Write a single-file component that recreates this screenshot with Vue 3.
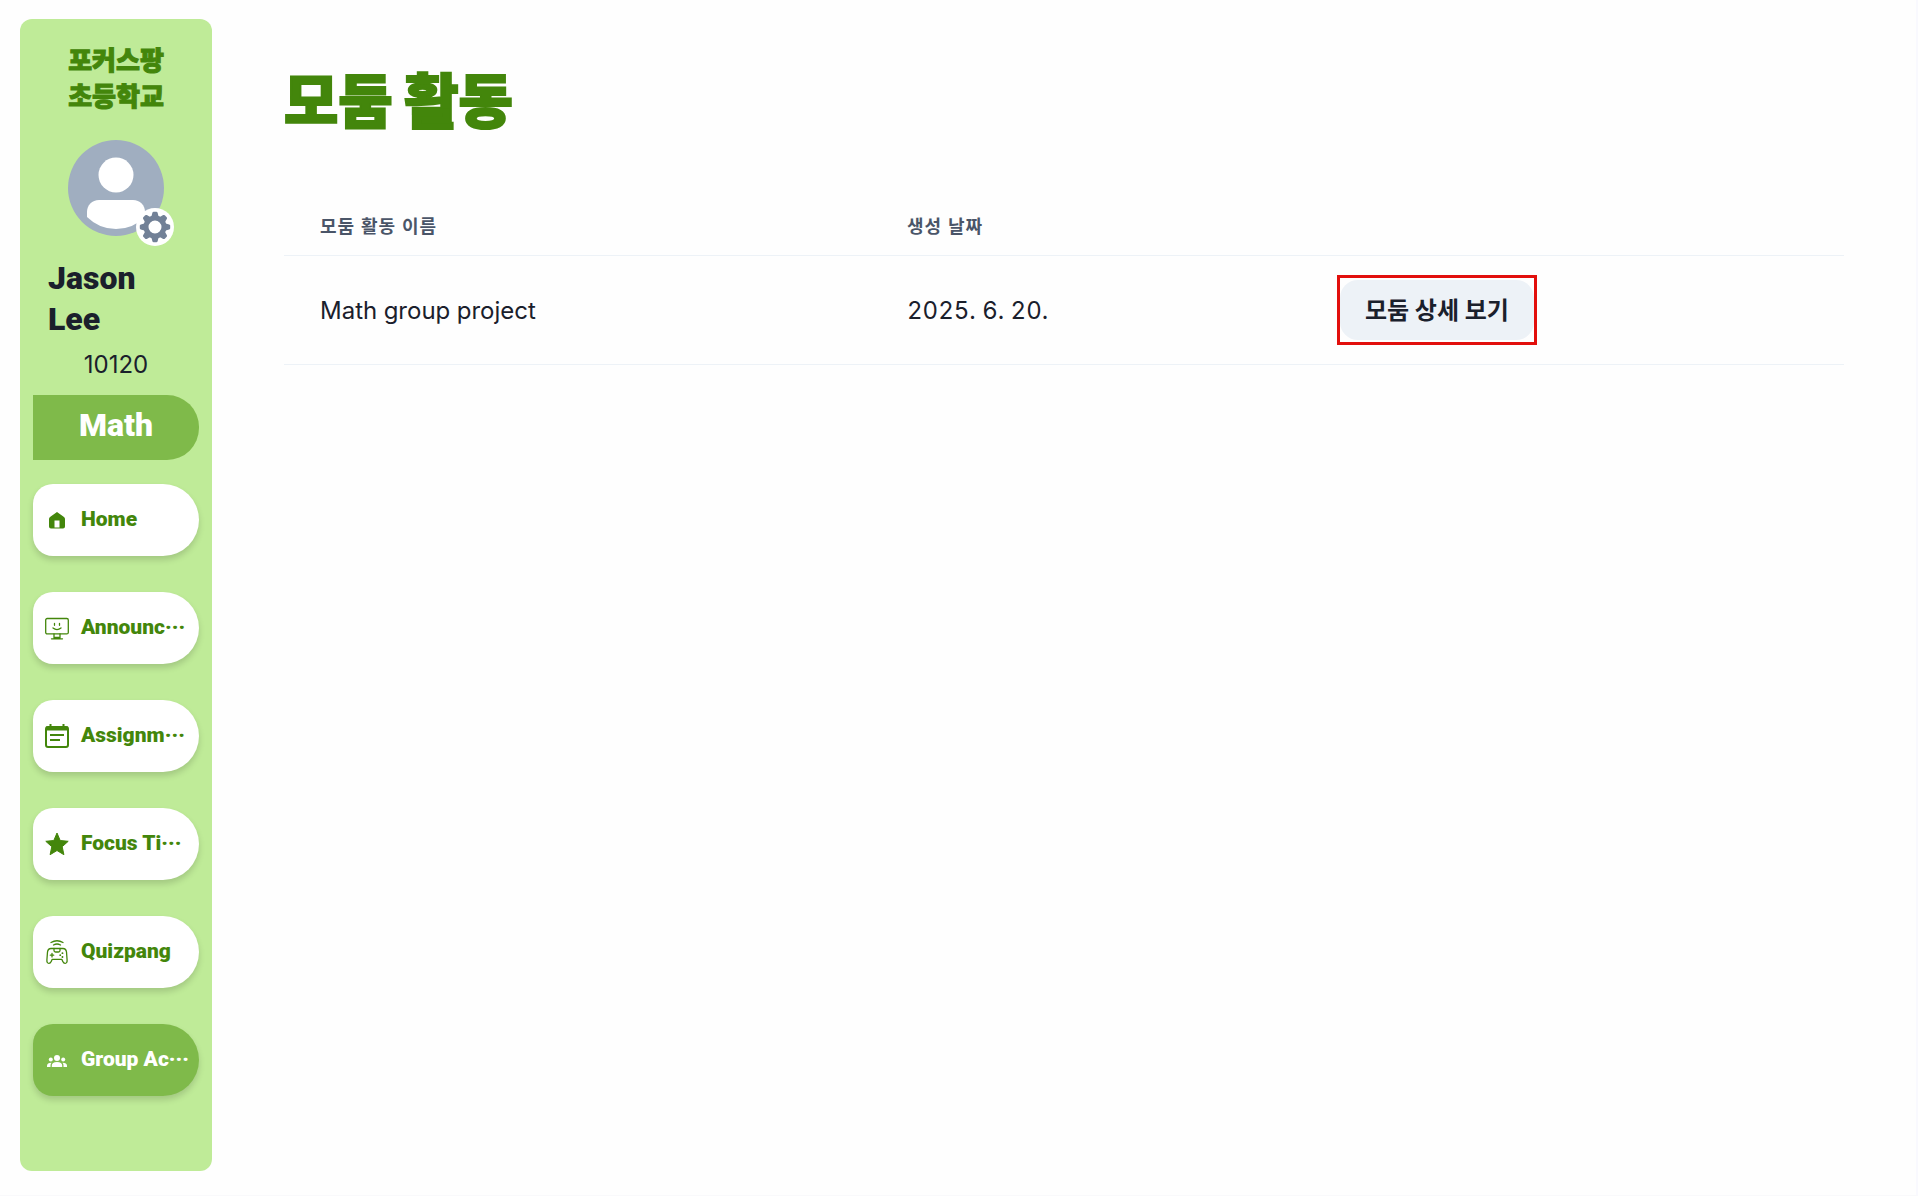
<template>
  <div class="layout">
    <!-- 사이드바 -->
    <aside class="sidebar">
      <h2 class="school">포커스팡<br />초등학교</h2>

      <div class="avatar">
        <svg class="avatar-img" viewBox="0 0 96 96">
          <defs>
            <clipPath id="face"><circle cx="48" cy="48" r="41" /></clipPath>
          </defs>
          <circle cx="48" cy="48" r="48" fill="#a0aec0" />
          <circle cx="48" cy="35" r="17.5" fill="#fff" />
          <path
            clip-path="url(#face)"
            fill="#fff"
            d="M31 60h34c7 0 12 5 12 12v24H19V72c0-7 5-12 12-12z"
          />
        </svg>
        <button class="setting" aria-label="설정">
          <svg viewBox="-16 -16 32 32" width="32" height="32">
            <g fill="#718096">
              <path
                v-for="n in 8"
                :key="n"
                :transform="`rotate(${n * 45})`"
                d="M-4 -9L-2.6 -14.2Q-2.3 -15.2 -1.3 -15.2H1.3Q2.3 -15.2 2.6 -14.2L4 -9z"
              />
            </g>
            <circle r="9" fill="none" stroke="#718096" stroke-width="5" />
          </svg>
        </button>
      </div>

      <p class="name">Jason Lee</p>
      <p class="number">10120</p>
      <div class="subject">Math</div>

      <!-- 메뉴 목록 -->
      <nav class="menu">
        <button
          v-for="m in menus"
          :key="m.icon"
          class="item"
          :class="{ active: current === m.icon }"
          @click="current = m.icon"
        >
          <svg class="icon" viewBox="0 0 24 24">
            <path
              v-if="m.icon === 'home'"
              fill="currentColor"
              fill-rule="evenodd"
              d="M12 4l7 5q1 .8 1 2v7.500q0 2-2 2H6q-2 0-2-2V11q0-1.200 1-2zM9.500 12.500v7h5v-7z"
            />
            <g
              v-else-if="m.icon === 'notice'"
              fill="none"
              stroke="currentColor"
              stroke-width="1.3"
              stroke-linecap="round"
            >
              <rect x=".7" y="2.500" width="22.600" height="15.400" rx="1.500" />
              <path d="M9.500 7.500v1.800M14.500 7.500v1.800M8 12q4 3.200 8 0M9 18v3.700M15 18v3.700M6.500 22.800h11M9 21.500h6" />
            </g>
            <g v-else-if="m.icon === 'task'" fill="none" stroke="currentColor" stroke-width="2">
              <rect x="1" y="3" width="22" height="20" rx="2" />
              <path d="M1 4.500h22" stroke-width="4" />
              <path d="M5.500 0v4M18.500 0v4M5 11h14M5 16h10" />
            </g>
            <path
              v-else-if="m.icon === 'focus'"
              fill="currentColor"
              stroke="currentColor"
              stroke-linejoin="round"
              d="M12 1l3.200 7.500 8 .8-6 5.400 1.700 8L12 18.500l-6.900 4.200 1.700-8-6-5.400 8-.8z"
            />
            <g
              v-else-if="m.icon === 'quiz'"
              fill="none"
              stroke="currentColor"
              stroke-width="1.300"
              stroke-linecap="round"
              stroke-linejoin="round"
            >
              <path d="M6 2.500q6-3.500 12 0M8.500 5q3.500-2 7 0" />
              <path d="M6 8.500h12q3 0 3.500 3.500l.6 8q.2 3.300-2 3.300-1.500 0-2.300-1.800l-1-2.200H7.200l-1 2.200Q5.400 23.300 3.900 23.300q-2.200 0-2-3.300l.6-8Q3 8.500 6 8.500z" />
              <path d="M9 8.500v2q0 1.500 1.500 1.500h3q1.500 0 1.500-1.500v-2M5.300 15.200h3.400M7 13.500v3.400" />
              <path d="M15.200 15.200h.1M17.400 13.200h.1M17.400 17h.1" stroke-width="1.800" />
            </g>
            <g v-else fill="currentColor">
              <circle cx="12" cy="10" r="3" />
              <circle cx="5.800" cy="11.500" r="2" />
              <circle cx="18.200" cy="11.500" r="2" />
              <path d="M6.800 19v-1.500q0-3.500 5.200-3.500t5.200 3.500V19zM2 19v-1.300q0-2.700 4.500-2.900-1 1.200-1 2.700V19zM22 19v-1.300q0-2.700-4.500-2.900 1 1.200 1 2.700V19z" />
            </g>
          </svg>
          <span class="label">{{ m.label }}</span>
        </button>
      </nav>
    </aside>

    <!-- 모둠 활동 목록 -->
    <main class="content">
      <h1 class="title">모둠 활동</h1>
      <table class="table">
        <thead>
          <tr>
            <th class="col-name">모둠 활동 이름</th>
            <th class="col-date">생성 날짜</th>
            <th></th>
          </tr>
        </thead>
        <tbody>
          <tr v-for="g in groups" :key="g.id">
            <td>{{ g.name }}</td>
            <td>{{ g.date }}</td>
            <td>
              <!-- 강조 테두리 -->
              <div class="highlight">
                <button class="detail">모둠 상세 보기</button>
              </div>
            </td>
          </tr>
        </tbody>
      </table>
    </main>
  </div>
</template>

<script setup>
import { ref } from 'vue';

const menus = [
  { icon: 'home', label: 'Home' },
  { icon: 'notice', label: 'Announc···' },
  { icon: 'task', label: 'Assignm···' },
  { icon: 'focus', label: 'Focus Ti···' },
  { icon: 'quiz', label: 'Quizpang' },
  { icon: 'group', label: 'Group Ac···' },
];

const current = ref('group');

const groups = [{ id: 1, name: 'Math group project', date: '2025. 6. 20.' }];
</script>

<style>
body {
  background: #fefefe;
}
</style>

<style scoped>
.layout {
  box-sizing: border-box;
  display: flex;
  align-items: stretch;
  min-height: 100vh;
  padding: 19px 72px 24px 20px;
  border-right: 2px solid #f9f9fe;
  border-bottom: 1px solid #f9f9fb;
  font-family: Inter, "Noto Sans CJK KR", sans-serif;
  font-size: 24px;
  color: #1a202c;
}

button {
  border: none;
  font-family: inherit;
  cursor: pointer;
}

.sidebar {
  box-sizing: border-box;
  flex: 0 0 192px;
  display: flex;
  flex-direction: column;
  align-items: center;
  padding: 24px 13px;
  border-radius: 12px;
  background: #bfeb98;
}

.school {
  margin: 0 0 25px;
  font-size: 26px;
  line-height: 36px;
  font-weight: 900;
  color: #43860b;
  -webkit-text-stroke: 1px #43860b;
}

.avatar {
  position: relative;
  width: 96px;
  height: 96px;
}

.avatar-img {
  display: block;
}

.setting {
  position: absolute;
  right: -10px;
  bottom: -10px;
  display: flex;
  align-items: center;
  justify-content: center;
  width: 38px;
  height: 38px;
  padding: 0;
  border-radius: 50%;
  background: #fff;
}

.name {
  align-self: stretch;
  width: 100px;
  margin: 22px 0 0 15px;
  font-family: Roboto, "Noto Sans CJK KR", sans-serif;
  font-size: 32px;
  line-height: 41px;
  font-weight: 900;
}

.number {
  margin: 7px 0 12px;
  line-height: 36px;
}

.subject {
  align-self: stretch;
  box-sizing: border-box;
  height: 65px;
  border-radius: 0 32px 32px 0;
  background: #7fba4a;
  color: #fff;
  font-family: Roboto, "Noto Sans CJK KR", sans-serif;
  font-size: 32px;
  line-height: 61px;
  font-weight: 900;
  text-align: center;
}

.menu {
  align-self: stretch;
  display: flex;
  flex-direction: column;
  gap: 36px;
  margin-top: 24px;
}

.item {
  display: flex;
  align-items: center;
  gap: 12px;
  height: 72px;
  padding: 0 0 0 12px;
  border-radius: 20px 36px 36px 20px;
  background: #fff;
  box-shadow: 0 4px 6px rgba(0, 0, 0, 0.15);
  color: #43860b;
}

.item.active {
  background: #7fba4a;
  color: #fff;
}

.icon {
  flex: none;
  width: 24px;
  height: 24px;
}

.label {
  padding-bottom: 2px;
  font-family: Roboto, "Noto Sans CJK KR", sans-serif;
  font-size: 21px;
  font-weight: 900;
  white-space: nowrap;
}

.content {
  flex: 1;
  min-width: 0;
  padding: 47px 0 0 72px;
}

.title {
  margin: 0 0 60px;
  font-size: 59px;
  line-height: 72px;
  font-weight: 900;
  color: #43860b;
  -webkit-text-stroke: 2px #43860b;
}

.table {
  width: 100%;
  table-layout: fixed;
  border-collapse: collapse;
  text-align: left;
  font-variant-numeric: lining-nums tabular-nums;
}

.table th,
.table td {
  padding: 0 36px;
  border-bottom: 1px solid #edf2f7;
}

.table th {
  height: 54px;
  padding-bottom: 3px;
  font-size: 18px;
  font-weight: 700;
  letter-spacing: 1px;
  color: #4a5568;
}

.table td {
  height: 108px;
}

.col-name {
  width: 515px;
}

.col-date {
  width: 361px;
}

.highlight {
  display: inline-block;
  margin-left: -3px;
  padding: 2px 0;
  border: 3px solid #e20f0c;
  vertical-align: middle;
}

.detail {
  display: block;
  height: 60px;
  padding: 0 25px 4px;
  border-radius: 18px;
  background: #edf2f7;
  color: #1a202c;
  font-size: 24px;
  font-weight: 700;
}
</style>
